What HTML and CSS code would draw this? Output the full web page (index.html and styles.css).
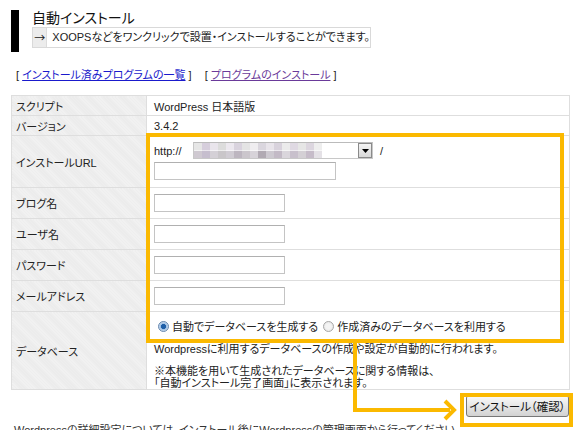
FILE: index.html
```html
<!DOCTYPE html>
<html lang="ja">
<head>
<meta charset="utf-8">
<link rel="stylesheet" href="styles.css">
</head>
<body>
<div class="page">
  <div class="heading">
    <div class="bar"></div>
    <div class="headtext">
      <h1 class="title">自動インストール</h1>
      <div class="subbox"><span class="arrow">→</span><span class="subtext">XOOPSなどをワンクリックで設置・インストールすることができます。</span></div>
    </div>
  </div>

  <div class="links">
    <span class="br">[</span> <a class="link" href="#">インストール済みプログラムの一覧</a> <span class="br">]</span>
    <span class="br br2">[</span> <a class="link visited" href="#">プログラムのインストール</a> <span class="br">]</span>
  </div>

  <table class="form">
    <tr class="r21"><th>スクリプト</th><td>WordPress 日本語版</td></tr>
    <tr class="r21"><th>バージョン</th><td>3.4.2</td></tr>
    <tr class="r52"><th>インストールURL</th>
      <td>
        <div class="urlline">
          <span class="proto">http://</span>
          <span class="select"><span class="mosaic"></span><span class="dd"><svg width="7" height="4" viewBox="0 0 7 4"><path d="M0 0h7L3.5 4z" fill="#000"/></svg></span></span>
          <span class="slash">/</span>
        </div>
        <div class="field wide"></div>
      </td></tr>
    <tr class="r32"><th>ブログ名</th><td><div class="field"></div></td></tr>
    <tr class="r32"><th>ユーザ名</th><td><div class="field"></div></td></tr>
    <tr class="r32"><th>パスワード</th><td><div class="field"></div></td></tr>
    <tr class="r32"><th>メールアドレス</th><td><div class="field"></div></td></tr>
    <tr class="rdb"><th>データベース</th>
      <td class="dbcell">
        <div class="radios">
          <span class="radio on"></span><span class="rlabel">自動でデータベースを生成する</span>
          <span class="radio"></span><span class="rlabel">作成済みのデータベースを利用する</span>
        </div>
        <p class="desc">Wordpressに利用するデータベースの作成や設定が自動的に行われます。</p>
        <p class="note">※本機能を用いて生成されたデータベースに関する情報は、<br>「自動インストール完了画面」に表示されます。</p>
      </td></tr>
  </table>

  <div class="actions"><button class="btn" type="button">インストール（確認）</button></div>
  <p class="foot">Wordpressの詳細設定については、インストール後にWordpressの管理画面から行ってください。</p>

  <div class="hl-box"></div>
  <div class="hl-btn"></div>
  <svg class="connector" width="120" height="80" viewBox="0 0 120 80">
    <path d="M11 0V67H106" fill="none" stroke="#fbb900" stroke-width="4"/>
    <path d="M101 58L110 67L101 76" fill="none" stroke="#fbb900" stroke-width="4" stroke-linejoin="miter"/>
  </svg>
</div>
</body>
</html>
```
FILE: styles.css
```css
html, body {
  margin: 0;
  background: #fff;
}
body {
  font-family: "Liberation Sans", "Noto Sans CJK JP", sans-serif;
  font-size: 11px;
  color: #222;
  font-feature-settings: "palt";
  overflow: hidden;
}
.page {
  position: relative;
  width: 577px;
  height: 430px;
  box-sizing: border-box;
  padding: 10px 8px 0 11px;
}
.heading {
  display: flex;
  gap: 13px;
}
.bar {
  width: 8px;
  height: 42px;
  background: #000;
}
.headtext {
  display: flex;
  flex-direction: column;
}
.title {
  margin: 0;
  font-size: 14px;
  font-weight: normal;
  line-height: 17px;
  color: #111;
}
.subbox {
  display: flex;
  width: 339px;
  height: 21px;
  box-sizing: border-box;
  border: 1px solid #d9d9d9;
  align-items: stretch;
}
.arrow {
  width: 20px;
  background: #ececec;
  border-right: 1px solid #dcdcdc;
  text-align: center;
  line-height: 19px;
  font-size: 11px;
  font-family: "Noto Sans CJK JP", sans-serif;
}
.subtext {
  padding-left: 5px;
  line-height: 19px;
  font-size: 11px;
  white-space: nowrap;
}
.links {
  margin-top: 15px;
  padding-left: 5px;
  height: 16px;
  line-height: 16px;
  white-space: nowrap;
}
.br2 { margin-left: 10px; }
.link { color: #1a1acc; }
.link.visited { color: #6a3a9a; }
.form {
  margin-top: 12px;
  width: 559px;
  border-collapse: collapse;
  border: 1px solid #dedede;
}
.form th, .form td {
  border: 1px solid #dedede;
  padding: 0;
  vertical-align: middle;
  text-align: left;
  font-weight: normal;
}
.form th {
  width: 130px;
  padding-left: 4px;
  background-color: #efefef;
  background-image: repeating-linear-gradient(45deg, #f3f3f3 0 1px, #e9e9e9 1px 2px);
}
.form td {
  padding-left: 7px;
}
.r21 { height: 20px; }
.r52 { height: 52px; }
.r32 { height: 31px; }
.rdb { height: 78px; }
.urlline {
  display: flex;
  align-items: center;
  height: 17px;
  margin-top: 1px;
}
.proto { width: 39px; }
.select {
  display: flex;
  width: 180px;
  height: 17px;
  box-sizing: border-box;
  border: 1px solid #c8c8c8;
  border-top-color: #bbb;
}
.mosaic {
  flex: 1;
  background:
    linear-gradient(to right, #e6e6e6 0 8px, #d6cedc 8px 16px, #e9e5ec 16px 24px, #dcdcdc 24px 32px, #ece8ef 32px 40px, #d9d3de 40px 48px, #e4e4e4 48px 56px, #efedf0 56px 64px, #dad6de 64px 72px, #e8e4ea 72px 80px, #d8d2dc 80px 88px, #ebebeb 88px 96px, #dfd9e3 96px 104px, #e6e6e6 104px 112px, #dcd6df 112px 120px, #eeeeee 120px 128px, #ffffff 128px) top/100% 50% no-repeat,
    linear-gradient(to right, #cfc9d1 0 8px, #c6bece 8px 16px, #d4d0d6 16px 24px, #c9c6c9 24px 32px, #d0ccd3 32px 40px, #bdb6c0 40px 48px, #cbc6cc 48px 56px, #d7d3d9 56px 64px, #b1aab3 64px 72px, #cdc9d0 72px 80px, #c3bac6 80px 88px, #dad6dc 88px 96px, #c8c0cc 96px 104px, #d4d0d5 104px 112px, #c6bcc9 112px 120px, #e4e1e6 120px 128px, #ffffff 128px) bottom/100% 50% no-repeat;
}
.dd {
  width: 14px;
  box-sizing: border-box;
  border: 1px solid #8a8a8a;
  background: linear-gradient(#f4f4f4, #d8d8d8);
  display: flex;
  align-items: center;
  justify-content: center;
}
.slash { margin-left: 7px; }
.field {
  width: 131px;
  height: 18px;
  box-sizing: border-box;
  border: 1px solid #c4c4c4;
  border-top-color: #b0b0b0;
  background: #fff;
}
.field.wide {
  width: 182px;
  margin-top: 3px;
  margin-bottom: 2px;
}
.form td.dbcell {
  vertical-align: top;
  padding-top: 4px;
}
.radios {
  display: flex;
  align-items: center;
  height: 20px;
  margin-left: 4px;
  white-space: nowrap;
}
.radio {
  width: 9px;
  height: 9px;
  border-radius: 50%;
  border: 1px solid #a8a8a8;
  background: radial-gradient(circle, #f4f4f4 0 40%, #dcdcdc 100%);
  margin-right: 3px;
}
.radio.on {
  border-color: #6a8ab0;
  background: radial-gradient(circle, #1f5fa8 0 35%, #9fc0e4 45%, #e8f0f8 100%);
}
.rlabel { margin-right: 5px; }
.desc {
  margin: 7px 0 0;
  line-height: 13px;
  white-space: nowrap;
}
.note {
  margin: 9px 0 0;
  line-height: 12px;
  white-space: nowrap;
}
.actions {
  display: flex;
  justify-content: flex-end;
  margin-top: 5px;
}
.btn {
  width: 103px;
  height: 22px;
  padding: 0;
  font-family: "Noto Sans CJK JP", sans-serif;
  font-feature-settings: "palt";
  font-size: 11.5px;
  color: #111;
  border: 1px solid #777;
  border-radius: 3px;
  background: linear-gradient(#fafafa, #e6e6e6 50%, #d2d2d2);
}
.foot {
  margin: 7px 0 0 3px;
  color: #333;
  white-space: nowrap;
  line-height: 12px;
}
.hl-box {
  position: absolute;
  left: 146px;
  top: 133px;
  width: 418px;
  height: 210px;
  box-sizing: border-box;
  border: 4px solid #fbb900;
}
.hl-btn {
  position: absolute;
  left: 460px;
  top: 393px;
  width: 113px;
  height: 34px;
  box-sizing: border-box;
  border: 4px solid #fbb900;
}
.connector {
  position: absolute;
  left: 344px;
  top: 343px;
}
```
